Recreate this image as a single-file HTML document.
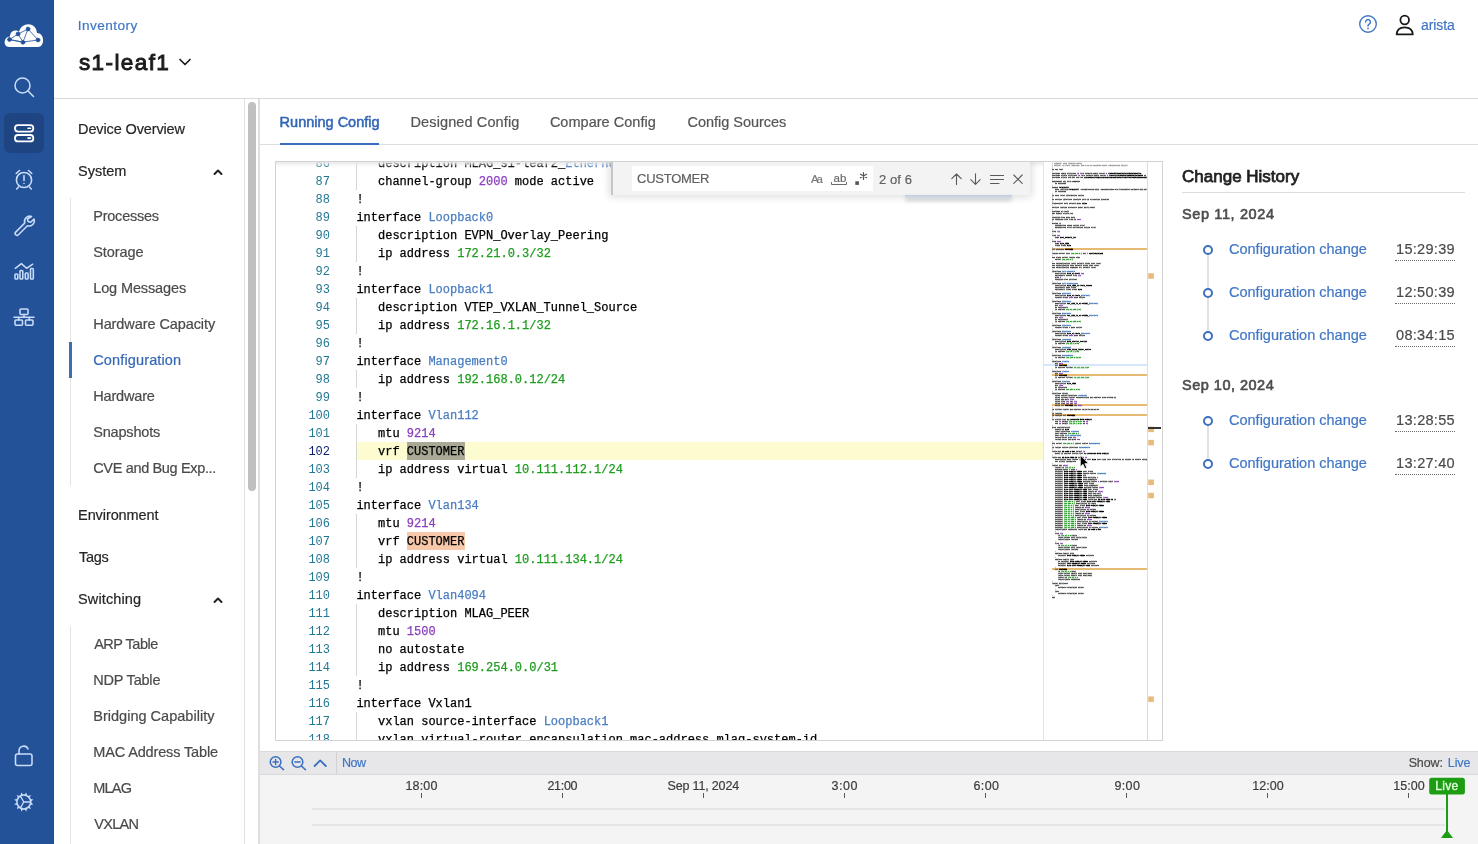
<!DOCTYPE html>
<html><head><meta charset="utf-8"><title>s1-leaf1</title>
<style>
*{box-sizing:border-box;margin:0;padding:0}
html,body{width:1478px;height:844px;overflow:hidden;background:#fff}
body{position:relative;font-family:"Liberation Sans",sans-serif}
.a{position:absolute}
.t{position:absolute;height:20px;line-height:20px;white-space:nowrap;-webkit-text-stroke:0.2px}
.code{position:absolute;font-family:"Liberation Mono",monospace;font-size:12px;line-height:18px;height:18px;white-space:pre;color:#000;-webkit-text-stroke:0.25px}
.ln{position:absolute;font-family:"Liberation Mono",monospace;font-size:12px;line-height:18px;height:18px;width:40px;text-align:right;color:#237893}
svg{position:absolute;overflow:visible}
.mmt{position:absolute;width:684px;height:2185px;overflow:hidden;font-family:"Liberation Mono",monospace;font-size:12px;line-height:10px;white-space:pre;color:#484848;font-weight:400;transform-origin:0 0;transform:scale(0.138889,0.2);-webkit-text-stroke:1.8px}
.mmt i{font-style:normal}.mmt .g{color:#999}.mmt b{font-weight:400;color:#000}
#w{position:absolute;left:0;top:0;width:1478px;height:844px;overflow:hidden;will-change:transform}
</style></head><body><div id="w">
<div class="a" style="left:0;top:0;width:54px;height:844px;background:#245299;border-right:1px solid #224b8c"></div><div class="a" style="left:4px;top:113px;width:40px;height:40px;border-radius:6px;background:#1f4482"></div><svg style="left:0;top:0" width="54" height="844" viewBox="0 0 54 844" fill="none" stroke="#c9dcf8" stroke-width="1.55" stroke-linecap="round" stroke-linejoin="round">
<!-- cloud logo -->
<path d="M9 47 C3 47 3 37 10 36.5 C10 31 16 29 19 32 C21 22 36 21 37 33 C45 33 45 47 38 47 Z" fill="#fff" stroke="none"/>
<g stroke="#245299" stroke-width="0.8" fill="#245299"><path d="M9.5 39.5 L18 34 L23 42 Z M18 34 L28 29 L23 42 M28 29 L38 40 L23 42 M9.5 39.5 L23 42" fill="none"/>
<circle cx="9.5" cy="39.5" r="1.9"/><circle cx="18" cy="34" r="1.9"/><circle cx="28" cy="29" r="1.9"/><circle cx="23" cy="42.3" r="1.9"/><circle cx="38" cy="40" r="1.9"/></g>
<!-- search -->
<circle cx="22.5" cy="85.5" r="7.5"/><path d="M28 91 L33.5 96.5"/>
<!-- devices -->
<g stroke="#fff" stroke-width="1.8"><rect x="15" y="125.2" width="18.3" height="6.400" rx="3"/><rect x="15" y="135" width="18.3" height="6.400" rx="3"/><path d="M28 128.3h2.5M28 138.1h2.5" stroke-width="1.6"/></g>
<!-- alarm -->
<circle cx="24" cy="180" r="7.6"/><path d="M24 175.5v5M24 183.4v.2M16.2 173.5l3.3-3M31.8 173.5l-3.3-3M18.5 187l-1.8 2M29.5 187l1.8 2"/>
<!-- wrench -->
<path d="M31.5 216.5a5.3 5.3 0 0 0-6.8 6.6l-9 9a1.9 1.9 0 0 0 2.7 2.7l9-9a5.3 5.3 0 0 0 6.6-6.8l-3.3 3.3-2.6-.7-.7-2.6z"/>
<!-- chart -->
<path d="M15.300 268.300L21.400 263.600L26.600 268.300L32.700 264.200"/><rect x="15" y="274" width="2.8" height="5" rx=".8"/><rect x="20" y="270.5" width="2.8" height="8.5" rx=".8"/><rect x="25.3" y="273" width="2.8" height="6" rx=".8"/><rect x="30.5" y="268.5" width="2.8" height="10.5" rx=".8"/>
<!-- network -->
<rect x="20" y="309" width="8" height="5.5" rx="1"/><rect x="15" y="320" width="7.5" height="5.3" rx="1"/><rect x="25.5" y="320" width="7.5" height="5.3" rx="1"/><path d="M14 317.3h20M24 314.5v2.8M18.7 317.3v2.7M29.3 317.3v2.7"/>
<!-- lock -->
<rect x="15.5" y="754" width="16.5" height="11.5" rx="2"/><path d="M19 754v-3.2a4.7 4.7 0 0 1 9-1.8"/>
<!-- gear -->
<circle cx="23.8" cy="802" r="6.9" stroke-width="1.5"/><path d="M23.8 802l-3.400-5.800M23.8 802h6.900M23.8 802l-3.400 5.800" stroke-width="1.3"/><path d="M31.1 802.6L33.4 804.6L30.4 805.1ZM29.8 806.2L30.8 809.0L28.0 808.0ZM26.9 808.6L26.4 811.6L24.4 809.3ZM23.2 809.3L21.2 811.6L20.7 808.6ZM19.6 808.0L16.8 809.0L17.8 806.2ZM17.2 805.1L14.2 804.6L16.5 802.6ZM16.5 801.4L14.2 799.4L17.2 798.9ZM17.8 797.8L16.8 795.0L19.6 796.0ZM20.7 795.4L21.2 792.4L23.2 794.7ZM24.4 794.7L26.4 792.4L26.9 795.4ZM28.0 796.0L30.8 795.0L29.8 797.8ZM30.4 798.9L33.4 799.4L31.1 801.4Z" fill="#c9dcf8" stroke="none"/>
</svg><div id="t_inv" class="t" style="left:77.80px;top:16px;font-size:13.6px;color:#4077c5;font-weight:400;letter-spacing:0.450px;">Inventory</div><div id="t_dev" class="t" style="left:78.95px;top:52.8px;font-size:22.5px;color:#1c1c1c;font-weight:400;letter-spacing:1.414px;height:30px;line-height:30px;margin-top:-5px;-webkit-text-stroke:0.95px #1c1c1c;">s1-leaf1</div><svg style="left:178px;top:56.500px" width="14" height="10" viewBox="0 0 14 10" fill="none" stroke="#1c1c1c" stroke-width="1.7" stroke-linecap="round" stroke-linejoin="round"><path d="M2 2.5l5 5 5-5"/></svg><div class="a" style="left:54px;top:98px;width:1424px;height:1px;background:#d9d9d9"></div><svg style="left:1358px;top:14px" width="20" height="20" viewBox="0 0 20 20" fill="none" stroke="#4077c5" stroke-width="1.4" stroke-linecap="round"><circle cx="10" cy="10" r="8.3"/><path d="M7.6 8a2.4 2.4 0 1 1 3.6 2.1c-.8.5-1.2.9-1.2 1.8" stroke-width="1.5"/><path d="M10 14.3v.2" stroke-width="1.7"/></svg><svg style="left:1394px;top:13px" width="22" height="24" viewBox="0 0 22 24" fill="none" stroke="#1a1a1a" stroke-width="1.8" stroke-linejoin="round"><circle cx="10.7" cy="7" r="4.3"/><path d="M2.6 21.3c.3-4.6 3.600-7 8.100-7s7.800 2.400 8.100 7z"/></svg><div id="t_user" class="t" style="left:1421.00px;top:15px;font-size:14px;color:#4077c5;font-weight:400;letter-spacing:-0.090px;">arista</div><div class="a" style="left:244px;top:99px;width:1px;height:745px;background:#e2e2e2"></div><div class="a" style="left:258px;top:99px;width:2px;height:745px;background:#dedede"></div><div class="a" style="left:248px;top:102px;width:8px;height:389px;border-radius:4px;background:#c0c0c0"></div><div id="m_do" class="t" style="left:78.05px;top:119px;font-size:14.5px;color:#262626;font-weight:400;letter-spacing:-0.129px;">Device Overview</div><div id="m_sys" class="t" style="left:78.05px;top:161px;font-size:14.5px;color:#262626;font-weight:400;letter-spacing:0.000px;">System</div><div id="m_env" class="t" style="left:78.05px;top:505px;font-size:14.5px;color:#262626;font-weight:400;letter-spacing:-0.090px;">Environment</div><div id="m_tags" class="t" style="left:78.95px;top:547px;font-size:14.5px;color:#262626;font-weight:400;letter-spacing:-0.300px;">Tags</div><div id="m_sw" class="t" style="left:78.05px;top:589px;font-size:14.5px;color:#262626;font-weight:400;letter-spacing:0.112px;">Switching</div><div id="s_proc" class="t" style="left:93.26px;top:206px;font-size:14.5px;color:#4a4a4a;font-weight:400;letter-spacing:-0.233px;">Processes</div><div id="s_stor" class="t" style="left:93.26px;top:242px;font-size:14.5px;color:#4a4a4a;font-weight:400;letter-spacing:-0.075px;">Storage</div><div id="s_log" class="t" style="left:93.26px;top:278px;font-size:14.5px;color:#4a4a4a;font-weight:400;letter-spacing:-0.130px;">Log Messages</div><div id="s_hwc" class="t" style="left:93.26px;top:314px;font-size:14.5px;color:#4a4a4a;font-weight:400;letter-spacing:-0.084px;">Hardware Capacity</div><div id="s_cfg" class="t" style="left:93.26px;top:350px;font-size:14.5px;color:#3567b5;font-weight:400;letter-spacing:0.135px;">Configuration</div><div id="s_hw" class="t" style="left:93.26px;top:386px;font-size:14.5px;color:#4a4a4a;font-weight:400;letter-spacing:-0.174px;">Hardware</div><div id="s_snap" class="t" style="left:93.26px;top:422px;font-size:14.5px;color:#4a4a4a;font-weight:400;letter-spacing:-0.187px;">Snapshots</div><div id="s_cve" class="t" style="left:93.26px;top:458px;font-size:14.5px;color:#4a4a4a;font-weight:400;letter-spacing:-0.347px;">CVE and Bug Exp...</div><div id="s_arp" class="t" style="left:94.16px;top:634px;font-size:14.5px;color:#4a4a4a;font-weight:400;letter-spacing:-0.482px;">ARP Table</div><div id="s_ndp" class="t" style="left:93.26px;top:670px;font-size:14.5px;color:#4a4a4a;font-weight:400;letter-spacing:-0.197px;">NDP Table</div><div id="s_brg" class="t" style="left:93.26px;top:706px;font-size:14.5px;color:#4a4a4a;font-weight:400;letter-spacing:0.015px;">Bridging Capability</div><div id="s_mac" class="t" style="left:93.26px;top:742px;font-size:14.5px;color:#4a4a4a;font-weight:400;letter-spacing:-0.141px;">MAC Address Table</div><div id="s_mlag" class="t" style="left:93.26px;top:778px;font-size:14.5px;color:#4a4a4a;font-weight:400;letter-spacing:-0.780px;">MLAG</div><div id="s_vx" class="t" style="left:94.16px;top:814px;font-size:14.5px;color:#4a4a4a;font-weight:400;letter-spacing:-0.675px;">VXLAN</div><div class="a" style="left:70px;top:198px;width:1px;height:288px;background:#e3e3e3"></div><div class="a" style="left:70px;top:626px;width:1px;height:218px;background:#e3e3e3"></div><div class="a" style="left:69px;top:342px;width:3px;height:36px;background:#3c6cb6"></div><svg style="left:213.300px;top:167.5px" width="10" height="8" viewBox="0 0 10 8" fill="none" stroke="#222" stroke-width="2" stroke-linecap="round" stroke-linejoin="round"><path d="M1.5 6l3.5-3.5 3.500 3.500"/></svg><svg style="left:213.300px;top:595.5px" width="10" height="8" viewBox="0 0 10 8" fill="none" stroke="#222" stroke-width="2" stroke-linecap="round" stroke-linejoin="round"><path d="M1.5 6l3.5-3.5 3.500 3.500"/></svg><div class="a" style="left:260px;top:144px;width:1218px;height:1px;background:#dedede"></div><div id="tab1" class="t" style="left:279.60px;top:112px;font-size:14.5px;color:#3165b5;font-weight:400;letter-spacing:-0.000px;-webkit-text-stroke:0.5px #3165b5;">Running Config</div><div id="tab2" class="t" style="left:410.52px;top:112px;font-size:14.5px;color:#555;font-weight:400;letter-spacing:0.116px;">Designed Config</div><div id="tab3" class="t" style="left:549.89px;top:112px;font-size:14.5px;color:#555;font-weight:400;letter-spacing:0.024px;">Compare Config</div><div id="tab4" class="t" style="left:687.47px;top:112px;font-size:14.5px;color:#555;font-weight:400;letter-spacing:-0.021px;">Config Sources</div><div class="a" style="left:280px;top:143px;width:99px;height:2px;background:#3a6dbd"></div><div class="a" style="left:275px;top:161px;width:888px;height:580px;border:1px solid #d2d2d2;background:#fff"></div><div class="a" id="ed" style="left:276px;top:162px;width:886px;height:578px;overflow:hidden"><div class="a" style="left:81px;top:280px;width:686px;height:18px;background:#fdfbd0"></div><div class="a" style="left:131.4px;top:280px;width:57.6px;height:18px;background:#a9a995"></div><div class="a" style="left:131.4px;top:370px;width:57.6px;height:18px;background:#f7c8a9"></div><div class="a" style="left:80px;top:-8px;width:1px;height:18px;background:#d6d6d6"></div><div class="a" style="left:80px;top:10px;width:1px;height:18px;background:#d6d6d6"></div><div class="a" style="left:80px;top:64px;width:1px;height:18px;background:#d6d6d6"></div><div class="a" style="left:80px;top:82px;width:1px;height:18px;background:#d6d6d6"></div><div class="a" style="left:80px;top:136px;width:1px;height:18px;background:#d6d6d6"></div><div class="a" style="left:80px;top:154px;width:1px;height:18px;background:#d6d6d6"></div><div class="a" style="left:80px;top:208px;width:1px;height:18px;background:#d6d6d6"></div><div class="a" style="left:80px;top:262px;width:1px;height:18px;background:#d6d6d6"></div><div class="a" style="left:80px;top:280px;width:1px;height:18px;background:#d6d6d6"></div><div class="a" style="left:80px;top:298px;width:1px;height:18px;background:#d6d6d6"></div><div class="a" style="left:80px;top:352px;width:1px;height:18px;background:#d6d6d6"></div><div class="a" style="left:80px;top:370px;width:1px;height:18px;background:#d6d6d6"></div><div class="a" style="left:80px;top:388px;width:1px;height:18px;background:#d6d6d6"></div><div class="a" style="left:80px;top:442px;width:1px;height:18px;background:#d6d6d6"></div><div class="a" style="left:80px;top:460px;width:1px;height:18px;background:#d6d6d6"></div><div class="a" style="left:80px;top:478px;width:1px;height:18px;background:#d6d6d6"></div><div class="a" style="left:80px;top:496px;width:1px;height:18px;background:#d6d6d6"></div><div class="a" style="left:80px;top:550px;width:1px;height:18px;background:#d6d6d6"></div><div class="a" style="left:80px;top:568px;width:1px;height:18px;background:#d6d6d6"></div><div class="ln" style="left:14px;top:-7px;color:#237893">86</div><div class="code" style="left:80.4px;top:-7px">   description MLAG_s1-leaf2_<span style="color:#4a7ec2">Ethernet6</span></div><div class="ln" style="left:14px;top:11px;color:#237893">87</div><div class="code" style="left:80.4px;top:11px">   channel-group <span style="color:#8a3fc0">2000</span> mode active</div><div class="ln" style="left:14px;top:29px;color:#237893">88</div><div class="code" style="left:80.4px;top:29px">!</div><div class="ln" style="left:14px;top:47px;color:#237893">89</div><div class="code" style="left:80.4px;top:47px">interface <span style="color:#4a7ec2">Loopback0</span></div><div class="ln" style="left:14px;top:65px;color:#237893">90</div><div class="code" style="left:80.4px;top:65px">   description EVPN_Overlay_Peering</div><div class="ln" style="left:14px;top:83px;color:#237893">91</div><div class="code" style="left:80.4px;top:83px">   ip address <span style="color:#1f9d1f">172.21.0.3/32</span></div><div class="ln" style="left:14px;top:101px;color:#237893">92</div><div class="code" style="left:80.4px;top:101px">!</div><div class="ln" style="left:14px;top:119px;color:#237893">93</div><div class="code" style="left:80.4px;top:119px">interface <span style="color:#4a7ec2">Loopback1</span></div><div class="ln" style="left:14px;top:137px;color:#237893">94</div><div class="code" style="left:80.4px;top:137px">   description VTEP_VXLAN_Tunnel_Source</div><div class="ln" style="left:14px;top:155px;color:#237893">95</div><div class="code" style="left:80.4px;top:155px">   ip address <span style="color:#1f9d1f">172.16.1.1/32</span></div><div class="ln" style="left:14px;top:173px;color:#237893">96</div><div class="code" style="left:80.4px;top:173px">!</div><div class="ln" style="left:14px;top:191px;color:#237893">97</div><div class="code" style="left:80.4px;top:191px">interface <span style="color:#4a7ec2">Management0</span></div><div class="ln" style="left:14px;top:209px;color:#237893">98</div><div class="code" style="left:80.4px;top:209px">   ip address <span style="color:#1f9d1f">192.168.0.12/24</span></div><div class="ln" style="left:14px;top:227px;color:#237893">99</div><div class="code" style="left:80.4px;top:227px">!</div><div class="ln" style="left:14px;top:245px;color:#237893">100</div><div class="code" style="left:80.4px;top:245px">interface <span style="color:#4a7ec2">Vlan112</span></div><div class="ln" style="left:14px;top:263px;color:#237893">101</div><div class="code" style="left:80.4px;top:263px">   mtu <span style="color:#8a3fc0">9214</span></div><div class="ln" style="left:14px;top:281px;color:#0b216f">102</div><div class="code" style="left:80.4px;top:281px">   vrf CUSTOMER</div><div class="ln" style="left:14px;top:299px;color:#237893">103</div><div class="code" style="left:80.4px;top:299px">   ip address virtual <span style="color:#1f9d1f">10.111.112.1/24</span></div><div class="ln" style="left:14px;top:317px;color:#237893">104</div><div class="code" style="left:80.4px;top:317px">!</div><div class="ln" style="left:14px;top:335px;color:#237893">105</div><div class="code" style="left:80.4px;top:335px">interface <span style="color:#4a7ec2">Vlan134</span></div><div class="ln" style="left:14px;top:353px;color:#237893">106</div><div class="code" style="left:80.4px;top:353px">   mtu <span style="color:#8a3fc0">9214</span></div><div class="ln" style="left:14px;top:371px;color:#237893">107</div><div class="code" style="left:80.4px;top:371px">   vrf CUSTOMER</div><div class="ln" style="left:14px;top:389px;color:#237893">108</div><div class="code" style="left:80.4px;top:389px">   ip address virtual <span style="color:#1f9d1f">10.111.134.1/24</span></div><div class="ln" style="left:14px;top:407px;color:#237893">109</div><div class="code" style="left:80.4px;top:407px">!</div><div class="ln" style="left:14px;top:425px;color:#237893">110</div><div class="code" style="left:80.4px;top:425px">interface <span style="color:#4a7ec2">Vlan4094</span></div><div class="ln" style="left:14px;top:443px;color:#237893">111</div><div class="code" style="left:80.4px;top:443px">   description MLAG_PEER</div><div class="ln" style="left:14px;top:461px;color:#237893">112</div><div class="code" style="left:80.4px;top:461px">   mtu <span style="color:#8a3fc0">1500</span></div><div class="ln" style="left:14px;top:479px;color:#237893">113</div><div class="code" style="left:80.4px;top:479px">   no autostate</div><div class="ln" style="left:14px;top:497px;color:#237893">114</div><div class="code" style="left:80.4px;top:497px">   ip address <span style="color:#1f9d1f">169.254.0.0/31</span></div><div class="ln" style="left:14px;top:515px;color:#237893">115</div><div class="code" style="left:80.4px;top:515px">!</div><div class="ln" style="left:14px;top:533px;color:#237893">116</div><div class="code" style="left:80.4px;top:533px">interface Vxlan1</div><div class="ln" style="left:14px;top:551px;color:#237893">117</div><div class="code" style="left:80.4px;top:551px">   vxlan source-interface <span style="color:#4a7ec2">Loopback1</span></div><div class="ln" style="left:14px;top:569px;color:#237893">118</div><div class="code" style="left:80.4px;top:569px">   vxlan virtual-router encapsulation mac-address mlag-system-id</div><div class="a" style="left:0;top:0;width:767px;height:5px;background:linear-gradient(#e9e9e9,rgba(255,255,255,0))"></div><div class="a" style="left:767px;top:0;width:104px;height:579px;background:#fff;border-left:1px solid #e4e4e4"></div><svg style="left:0;top:0" width="886" height="579" viewBox="0 0 886 579" shape-rendering="crispEdges"><rect x="776" y="86" width="95" height="2" fill="#e8b973"/><rect x="789" y="86" width="8" height="2" fill="#d08a1e"/><rect x="768" y="202" width="103" height="2" fill="#d6e6fb"/><rect x="783" y="202" width="8" height="2" fill="#d08a1e"/><rect x="776" y="212" width="95" height="2" fill="#e8b973"/><rect x="783" y="212" width="8" height="2" fill="#d08a1e"/><rect x="776" y="242" width="95" height="2" fill="#e8b973"/><rect x="789" y="242" width="8" height="2" fill="#d08a1e"/><rect x="776" y="252" width="95" height="2" fill="#e8b973"/><rect x="791" y="252" width="8" height="2" fill="#d08a1e"/><rect x="776" y="406" width="95" height="2" fill="#e8b973"/><rect x="783" y="406" width="8" height="2" fill="#d08a1e"/></svg><div class="mmt" style="left:776px;top:0"><i class="g">! Command: show running-config</i>
<i class="g">! device: s1-leaf1 (cEOSLab, EOS-4.30.1F-32315456.4301F (engineering build))</i>
<i class="g">!</i>
no aaa root
<i class="g">!</i>
username admin privilege <i style="color:#8a3fc0">15</i> role network-admin secret <i style="color:#8a3fc0">5</i> $<b>1$5O85YVVn$HrXcfOivJEnISTMb6xrJc.</b>
username arista privilege <i style="color:#8a3fc0">15</i> role network-admin secret <i style="color:#8a3fc0">5</i> $<b>1$4VjIjfd1$XkUVulbNDBhFMiPSfdEUV0</b> ab
username arista ssh-key ssh-rsa <b>AAAAB3NzaC1yc2EAAAADAQABAAABAQDHfbQ3pLfPCZOf7eqf3Dd5VqKCNhQ9ZkJ</b>
<i class="g">!</i>
management api htlp-commands
   no shutdown
<i class="g">!</i>
daemon <b>TerminAttr</b>
   exec /usr/bin/<b>TerminAttr</b> -cvcompression=gzip -smashexcludes=ale,flexCounter,hardware,kni,pul
   no shutdown
<i class="g">!</i>
ip dhcp relay information option
<i class="g">!</i>
no service interface inactive port-id allocation disabled
<i class="g">!</i>
transceiver qsfp default-mode <b>4x10G</b>
<i class="g">!</i>
service routing protocols model multi-agent
<i class="g">!</i>
hostname s1-leaf1
dns domain arista.lab
<i class="g">!</i>
spanning-tree mode mstp
no spanning-tree vlan-id <i style="color:#8a3fc0">4094</i>
<i class="g">!</i>
system l1
   unsupported speed action error
   unsupported error-correction action error
<i class="g">!</i>
vlan <i style="color:#8a3fc0">112</i>
<i class="g">!</i>
vlan <i style="color:#8a3fc0">134</i>
   name <b>Host_Network_134</b>
<i class="g">!</i>
vlan <i style="color:#8a3fc0">4094</i>
   name <b>MLAG_PEER</b>
   trunk group <b>MLAG</b>
<i class="g">!</i>
vrf instance <b>CUSTOMER</b>
<i class="g">!</i>
radius-server host <i style="color:#1f9d1f">192.168.0.1</i> key <i style="color:#8a3fc0">7</i> <b>0207165218120E</b>
<i class="g">!</i>
aaa group server radius atds
   server <i style="color:#1f9d1f">192.168.0.1</i>
<i class="g">!</i>
aaa authentication login default group atds local
aaa authorization exec default group atds local
aaa authorization commands all default local
<i class="g">!</i>
interface <i style="color:#4a7ec2">Port-Channel5</i>
   description <b>MLAG_s1-host1</b> <i style="color:#8a3fc0">122</i>
   switchport access vlan <i style="color:#8a3fc0">112</i>
   mlag <i style="color:#8a3fc0">5</i>
   spanning-tree portfast
<i class="g">!</i>
interface <i style="color:#4a7ec2">Port-Channel2000</i>
   description <b>MLAG_PEER_s1-leaf2_Po2000</b>
   switchport mode trunk
   switchport trunk group <b>MLAG</b>
<i class="g">!</i>
interface <i style="color:#4a7ec2">Ethernet1</i>
   description <b>MLAG_s1-leaf2_</b><i style="color:#4a7ec2">Ethernet1</i>
   channel-group <i style="color:#8a3fc0">2000</i> mode active
<i class="g">!</i>
interface <i style="color:#4a7ec2">Ethernet2</i>
   description <b>P2P_LINK_TO_S1-SPINE1_</b><i style="color:#4a7ec2">Ethernet2</i>
   mtu <i style="color:#8a3fc0">9214</i>
   no switchport
   ip address <i style="color:#1f9d1f">172.31.255.1/31</i>
<i class="g">!</i>
interface <i style="color:#4a7ec2">Ethernet3</i>
   description <b>P2P_LINK_TO_S1-SPINE2_</b><i style="color:#4a7ec2">Ethernet2</i>
   mtu <i style="color:#8a3fc0">9214</i>
   no switchport
   ip address <i style="color:#1f9d1f">172.31.255.3/31</i>
<i class="g">!</i>
interface <i style="color:#4a7ec2">Ethernet4</i>
   channel-group <i style="color:#8a3fc0">5</i> mode active
<i class="g">!</i>
interface <i style="color:#4a7ec2">Ethernet6</i>
   description <b>MLAG_s1-leaf2_</b><i style="color:#4a7ec2">Ethernet6</i>
   channel-group <i style="color:#8a3fc0">2000</i> mode active
<i class="g">!</i>
interface <i style="color:#4a7ec2">Loopback0</i>
   description <b>EVPN_Overlay_Peering</b>
   ip address <i style="color:#1f9d1f">172.21.0.3/32</i>
<i class="g">!</i>
interface <i style="color:#4a7ec2">Loopback1</i>
   description <b>VTEP_VXLAN_Tunnel_Source</b>
   ip address <i style="color:#1f9d1f">172.16.1.1/32</i>
<i class="g">!</i>
interface <i style="color:#4a7ec2">Management0</i>
   ip address <i style="color:#1f9d1f">192.168.0.12/24</i>
<i class="g">!</i>
interface <i style="color:#4a7ec2">Vlan112</i>
   mtu <i style="color:#8a3fc0">9214</i>
   vrf <b>CUSTOMER</b>
   ip address virtual <i style="color:#1f9d1f">10.111.112.1/24</i>
<i class="g">!</i>
interface <i style="color:#4a7ec2">Vlan134</i>
   mtu <i style="color:#8a3fc0">9214</i>
   vrf <b>CUSTOMER</b>
   ip address virtual <i style="color:#1f9d1f">10.111.134.1/24</i>
<i class="g">!</i>
interface <i style="color:#4a7ec2">Vlan4094</i>
   description <b>MLAG_PEER</b>
   mtu <i style="color:#8a3fc0">1500</i>
   no autostate
   ip address <i style="color:#1f9d1f">169.254.0.0/31</i>
<i class="g">!</i>
interface Vxlan1
   vxlan source-interface <i style="color:#4a7ec2">Loopback1</i>
   vxlan virtual-router encapsulation mac-address mlag-system-id
   vxlan udp-port <i style="color:#8a3fc0">4789</i>
   vxlan vlan <i style="color:#8a3fc0">112</i> vni <i style="color:#8a3fc0">112</i>
   vxlan vlan <i style="color:#8a3fc0">134</i> vni <i style="color:#8a3fc0">134</i>
   vxlan vrf <b>CUSTOMER</b> vni <i style="color:#8a3fc0">5001</i>
<i class="g">!</i>
ip virtual-router mac-address 00:1c:73:00:00:99
<i class="g">!</i>
ip routing
ip routing vrf <b>CUSTOMER</b>
<i class="g">!</i>
ip prefix-list <b>PL-LOOPBACKS-EVPN-OVERLAY</b>
   seq <i style="color:#8a3fc0">10</i> permit <i style="color:#1f9d1f">172.21.0.0/24</i> eq <i style="color:#8a3fc0">32</i>
   seq <i style="color:#8a3fc0">20</i> permit <i style="color:#1f9d1f">172.16.1.0/24</i> eq <i style="color:#8a3fc0">32</i>
<i class="g">!</i>
mlag configuration
   domain-id <b>MLAG</b>
   local-interface <i style="color:#4a7ec2">Vlan4094</i>
   peer-address <i style="color:#1f9d1f">169.254.0.1</i>
   peer-link <i style="color:#4a7ec2">Port-Channel2000</i>
   reload-delay mlag <i style="color:#8a3fc0">300</i>
   reload-delay non-mlag <i style="color:#8a3fc0">330</i>
<i class="g">!</i>
ntp server <i style="color:#1f9d1f">192.168.0.1</i> iburst source <i style="color:#4a7ec2">Management0</i>
<i class="g">!</i>
ip radius source-interface <i style="color:#4a7ec2">Management0</i>
<i class="g">!</i>
route-map <b>RM-CONN-2-BGP</b> permit <i style="color:#8a3fc0">10</i>
   match ip address prefix-list <b>PL-LOOPBACKS-EVPN-OVERLAY</b>
<i class="g">!</i>
route-map <b>RM-MLAG-PEER-IN</b> permit <i style="color:#8a3fc0">10</i>
   description Make routes learned over <b>MLAG</b> Peer-link less preferred on spines to ensure optim
   set origin incomplete
<i class="g">!</i>
router bgp <i style="color:#8a3fc0">65101</i>
   router-id <i style="color:#1f9d1f">172.21.0.3</i>
   maximum-paths <i style="color:#8a3fc0">4</i> ecmp <i style="color:#8a3fc0">4</i>
   neighbor <b>EVPN-OVERLAY-PEERS</b> peer group
   neighbor <b>EVPN-OVERLAY-PEERS</b> update-source <i style="color:#4a7ec2">Loopback0</i>
   neighbor <b>EVPN-OVERLAY-PEERS</b> bfd
   neighbor <b>EVPN-OVERLAY-PEERS</b> ebgp-multihop <i style="color:#8a3fc0">3</i>
   neighbor <b>EVPN-OVERLAY-PEERS</b> send-community
   neighbor <b>EVPN-OVERLAY-PEERS</b> maximum-routes <i style="color:#8a3fc0">0</i> warning-limit <i style="color:#8a3fc0">12000</i>
   neighbor <b>IPv4-UNDERLAY-PEERS</b> peer group
   neighbor <b>IPv4-UNDERLAY-PEERS</b> send-community
   neighbor <b>IPv4-UNDERLAY-PEERS</b> maximum-routes <i style="color:#8a3fc0">12000</i>
   neighbor <b>MLAG-IPv4-UNDERLAY-PEER</b> peer group
   neighbor <b>MLAG-IPv4-UNDERLAY-PEER</b> remote-as <i style="color:#8a3fc0">65101</i>
   neighbor <b>MLAG-IPv4-UNDERLAY-PEER</b> next-hop-self
   neighbor <b>MLAG-IPv4-UNDERLAY-PEER</b> send-community
   neighbor <b>MLAG-IPv4-UNDERLAY-PEER</b> maximum-routes <i style="color:#8a3fc0">12000</i>
   neighbor <b>MLAG-IPv4-UNDERLAY-PEER</b> route-map <b>RM-MLAG-PEER-IN</b> in
   neighbor <i style="color:#1f9d1f">169.254.0.1</i> peer group <b>MLAG-IPv4-UNDERLAY-PEER</b>
   neighbor <i style="color:#1f9d1f">169.254.0.1</i> description s1-leaf2
   neighbor <i style="color:#1f9d1f">172.21.0.1</i> peer group <b>EVPN-OVERLAY-PEERS</b>
   neighbor <i style="color:#1f9d1f">172.21.0.1</i> remote-as <i style="color:#8a3fc0">65100</i>
   neighbor <i style="color:#1f9d1f">172.21.0.1</i> description s1-spine1
   neighbor <i style="color:#1f9d1f">172.21.0.2</i> peer group <b>EVPN-OVERLAY-PEERS</b>
   neighbor <i style="color:#1f9d1f">172.21.0.2</i> remote-as <i style="color:#8a3fc0">65100</i>
   neighbor <i style="color:#1f9d1f">172.21.0.2</i> description s1-spine2
   neighbor <i style="color:#1f9d1f">172.31.255.0</i> peer group <b>IPv4-UNDERLAY-PEERS</b>
   neighbor <i style="color:#1f9d1f">172.31.255.0</i> remote-as <i style="color:#8a3fc0">65100</i>
   neighbor <i style="color:#1f9d1f">172.31.255.0</i> description s1-spine1_<i style="color:#4a7ec2">Ethernet2</i>
   neighbor <i style="color:#1f9d1f">172.31.255.2</i> peer group <b>IPv4-UNDERLAY-PEERS</b>
   neighbor <i style="color:#1f9d1f">172.31.255.2</i> remote-as <i style="color:#8a3fc0">65100</i>
   neighbor <i style="color:#1f9d1f">172.31.255.2</i> description s1-spine2_<i style="color:#4a7ec2">Ethernet2</i>
   redistribute connected route-map <b>RM-CONN-2-BGP</b>
   <i class="g">!</i>
   vlan <i style="color:#8a3fc0">112</i>
      rd <i style="color:#1f9d1f">172.21.0.3</i>:10112
      route-target both 10112:10112
      redistribute learned
   <i class="g">!</i>
   vlan <i style="color:#8a3fc0">134</i>
      rd <i style="color:#1f9d1f">172.21.0.3</i>:10134
      route-target both 10134:10134
      redistribute learned
   <i class="g">!</i>
   address-family evpn
      neighbor <b>EVPN-OVERLAY-PEERS</b> activate
   <i class="g">!</i>
   address-family ipv4
      no neighbor <b>EVPN-OVERLAY-PEERS</b> activate
      neighbor <b>IPv4-UNDERLAY-PEERS</b> activate
      neighbor <b>MLAG-IPv4-UNDERLAY-PEER</b> activate
   <i class="g">!</i>
   vrf <b>CUSTOMER</b>
      rd <i style="color:#1f9d1f">172.21.0.3</i>:5001
      route-target import evpn 5001:5001
      route-target export evpn 5001:5001
      router-id <i style="color:#1f9d1f">172.21.0.3</i>
      redistribute connected
<i class="g">!</i>
router multicast
   ipv4
      software-forwarding kernel
   <i class="g">!</i>
   ipv6
      software-forwarding kernel
<i class="g">!</i>
end</div><div class="a" style="left:871px;top:0;width:15px;height:579px;background:#fff;border-left:1px solid #dcdcdc"></div><svg style="left:0;top:0" width="886" height="579" viewBox="0 0 886 579"><rect x="872.2" y="111.23" width="5.7" height="5.5" fill="#e8bb7c"/><rect x="872.2" y="264.64" width="5.7" height="5.5" fill="#e8bb7c"/><rect x="872.2" y="277.87" width="5.7" height="5.5" fill="#e8bb7c"/><rect x="872.2" y="317.54" width="5.7" height="5.5" fill="#e8bb7c"/><rect x="872.2" y="330.76" width="5.7" height="5.5" fill="#e8bb7c"/><rect x="872.2" y="534.43" width="5.7" height="5.5" fill="#e8bb7c"/><rect x="872" y="265" width="13" height="2" fill="#333"/></svg><div class="a" style="left:335px;top:0;width:419px;height:33px;background:#f3f3f3;box-shadow:0 0 8px 2px rgba(0,0,0,.13);border-left:2px solid #c6c6c6"></div><div class="a" style="left:629px;top:33px;width:107px;height:4px;background:linear-gradient(#c3cfdf,#d9dde3);border-radius:0 0 3px 3px;box-shadow:0 2px 4px rgba(0,0,0,.18)"></div><div class="a" style="left:356px;top:4px;width:241px;height:25px;background:#fff"></div></div><div id="f_q" class="t" style="left:637.00px;top:168.5px;font-size:13px;color:#616161;font-weight:400;letter-spacing:-0.257px;">CUSTOMER</div><div id="f_cnt" class="t" style="left:879.00px;top:169.5px;font-size:13px;color:#616161;font-weight:400;letter-spacing:0.090px;">2 of 6</div><div id="f_aa" class="t" style="left:811.00px;top:169px;font-size:11.5px;color:#7a7a7a;font-weight:400;letter-spacing:-2.250px;">Aa</div><div id="f_ab" class="t" style="left:833.50px;top:167.5px;font-size:11.5px;color:#6a6a6a;font-weight:400;letter-spacing:0.000px;">ab</div><svg style="left:800px;top:160px" width="240" height="45" viewBox="800 160 240 45" fill="none" stroke="#5a5a5a" stroke-width="1.1" stroke-linecap="round" stroke-linejoin="round">
<path d="M831.5 182.500v2h15v-2" stroke="#6a6a6a" stroke-width="1"/>
<rect x="855.3" y="181.300" width="3.600" height="3.600" fill="#555" stroke="none"/>
<path d="M863.500 172.500v7M860.500 174.200l6 3.500M866.500 174.200l-6 3.500" stroke="#555" stroke-width="1.2"/>
<path d="M956.500 184.500v-10.500M951.800 178.700l4.700-4.700 4.700 4.700"/>
<path d="M975.500 173.700v10.500M970.800 179.700l4.700 4.700 4.700-4.700"/>
<path d="M990.500 175.500h13M990.500 179.500h13M990.500 183.500h8.500"/>
<path d="M1013.800 175l8.400 8.400M1022.200 175l-8.400 8.400"/>
</svg><svg style="left:1079.700px;top:454.800px" width="9.500" height="14.600" viewBox="0 0 13 20"><path d="M0.500 0.500v15.500l3.600-3.400 2.600 6 2.500-1.100-2.600-5.800h5z" fill="#000" stroke="#fff" stroke-width="0.900"/></svg><div id="ch_title" class="t" style="left:1182.05px;top:166.5px;font-size:17px;color:#1f1f1f;font-weight:400;letter-spacing:-0.003px;-webkit-text-stroke:0.75px #1f1f1f;">Change History</div><div class="a" style="left:1182px;top:192px;width:283px;height:1px;background:#dcdcdc"></div><div id="ch_d1" class="t" style="left:1182.05px;top:204.2px;font-size:14.5px;color:#4d4d4d;font-weight:400;letter-spacing:0.614px;-webkit-text-stroke:0.6px #4d4d4d;">Sep 11, 2024</div><div id="ch_d2" class="t" style="left:1182.05px;top:375.1px;font-size:14.5px;color:#4d4d4d;font-weight:400;letter-spacing:0.492px;-webkit-text-stroke:0.6px #4d4d4d;">Sep 10, 2024</div><div class="a" style="left:1207px;top:249px;width:2px;height:86px;background:#e2e2e2"></div><div class="a" style="left:1207px;top:420px;width:2px;height:43px;background:#e2e2e2"></div><div class="a" style="left:1203px;top:244.5px;width:10px;height:10px;border-radius:50%;border:2px solid #3d70bd;background:#fff"></div><div id="ch_c0" class="t" style="left:1229.00px;top:239px;font-size:14.5px;color:#4077c5;font-weight:400;letter-spacing:0.000px;">Configuration change</div><div id="ch_t0" class="t" style="left:1396.05px;top:239px;font-size:14.5px;color:#4a4a4a;font-weight:400;letter-spacing:0.306px;">15:29:39</div><div class="a" style="left:1395px;top:260px;width:60px;height:0;border-top:1px dotted #6a6a6a"></div><div class="a" style="left:1203px;top:287.5px;width:10px;height:10px;border-radius:50%;border:2px solid #3d70bd;background:#fff"></div><div id="ch_c1" class="t" style="left:1229.00px;top:282px;font-size:14.5px;color:#4077c5;font-weight:400;letter-spacing:0.000px;">Configuration change</div><div id="ch_t1" class="t" style="left:1396.05px;top:282px;font-size:14.5px;color:#4a4a4a;font-weight:400;letter-spacing:0.306px;">12:50:39</div><div class="a" style="left:1395px;top:303px;width:60px;height:0;border-top:1px dotted #6a6a6a"></div><div class="a" style="left:1203px;top:330.5px;width:10px;height:10px;border-radius:50%;border:2px solid #3d70bd;background:#fff"></div><div id="ch_c2" class="t" style="left:1229.00px;top:325px;font-size:14.5px;color:#4077c5;font-weight:400;letter-spacing:0.000px;">Configuration change</div><div id="ch_t2" class="t" style="left:1396.05px;top:325px;font-size:14.5px;color:#4a4a4a;font-weight:400;letter-spacing:0.305px;">08:34:15</div><div class="a" style="left:1395px;top:346px;width:60px;height:0;border-top:1px dotted #6a6a6a"></div><div class="a" style="left:1203px;top:415.5px;width:10px;height:10px;border-radius:50%;border:2px solid #3d70bd;background:#fff"></div><div id="ch_c3" class="t" style="left:1229.00px;top:410px;font-size:14.5px;color:#4077c5;font-weight:400;letter-spacing:0.000px;">Configuration change</div><div id="ch_t3" class="t" style="left:1396.05px;top:410px;font-size:14.5px;color:#4a4a4a;font-weight:400;letter-spacing:0.308px;">13:28:55</div><div class="a" style="left:1395px;top:431px;width:60px;height:0;border-top:1px dotted #6a6a6a"></div><div class="a" style="left:1203px;top:458.5px;width:10px;height:10px;border-radius:50%;border:2px solid #3d70bd;background:#fff"></div><div id="ch_c4" class="t" style="left:1229.00px;top:453px;font-size:14.5px;color:#4077c5;font-weight:400;letter-spacing:0.000px;">Configuration change</div><div id="ch_t4" class="t" style="left:1396.05px;top:453px;font-size:14.5px;color:#4a4a4a;font-weight:400;letter-spacing:0.308px;">13:27:40</div><div class="a" style="left:1395px;top:474px;width:60px;height:0;border-top:1px dotted #6a6a6a"></div><div class="a" style="left:260px;top:751px;width:1218px;height:24px;background:#e7e7e9;border-top:1px solid #dadada;border-bottom:1px solid #d9d9d9"></div><div class="a" style="left:260px;top:775px;width:1218px;height:69px;background:#f4f4f5"></div><div class="a" style="left:336px;top:752px;width:1px;height:22px;background:#d2d2d4"></div><svg style="left:260px;top:751px" width="80" height="24" viewBox="260 751 80 24" fill="none" stroke="#3a6fc0" stroke-width="1.5" stroke-linecap="round" stroke-linejoin="round">
<circle cx="275.600" cy="762" r="5.300"/><path d="M279.500 766l4 3.600M273 762h5.200M275.600 759.400v5.200"/>
<circle cx="297.500" cy="762" r="5.300"/><path d="M301.400 766l4 3.600M294.900 762h5.200"/>
<path d="M314.600 766l5.600-5.600 5.600 5.600" stroke-width="1.800"/>
</svg><div id="tl_now" class="t" style="left:342.05px;top:752.5px;font-size:12.5px;color:#4077c5;font-weight:400;letter-spacing:-0.495px;">Now</div><div id="tl_show" class="t" style="left:1408.63px;top:752.5px;font-size:12.5px;color:#4a4a4a;font-weight:400;letter-spacing:-0.110px;">Show:</div><div id="tl_live" class="t" style="left:1447.84px;top:752.5px;font-size:12.5px;color:#4077c5;font-weight:400;letter-spacing:-0.120px;">Live</div><div id="tk0" class="t" style="left:405.49px;top:776px;font-size:12.5px;color:#3c3c3c;font-weight:400;letter-spacing:0.141px;">18:00</div><div class="a" style="left:421px;top:793px;width:1px;height:5px;background:#585858"></div><div id="tk1" class="t" style="left:547.38px;top:776px;font-size:12.5px;color:#3c3c3c;font-weight:400;letter-spacing:-0.270px;">21:00</div><div class="a" style="left:562px;top:793px;width:1px;height:5px;background:#585858"></div><div id="tk2" class="t" style="left:667.53px;top:776px;font-size:12.5px;color:#3c3c3c;font-weight:400;letter-spacing:-0.168px;">Sep 11, 2024</div><div class="a" style="left:703px;top:793px;width:1px;height:5px;background:#585858"></div><div id="tk3" class="t" style="left:831.43px;top:776px;font-size:12.5px;color:#3c3c3c;font-weight:400;letter-spacing:0.540px;">3:00</div><div class="a" style="left:844px;top:793px;width:1px;height:5px;background:#585858"></div><div id="tk4" class="t" style="left:973.40px;top:776px;font-size:12.5px;color:#3c3c3c;font-weight:400;letter-spacing:0.450px;">6:00</div><div class="a" style="left:985px;top:793px;width:1px;height:5px;background:#585858"></div><div id="tk5" class="t" style="left:1114.41px;top:776px;font-size:12.5px;color:#3c3c3c;font-weight:400;letter-spacing:0.390px;">9:00</div><div class="a" style="left:1126px;top:793px;width:1px;height:5px;background:#585858"></div><div id="tk6" class="t" style="left:1252.24px;top:776px;font-size:12.5px;color:#3c3c3c;font-weight:400;letter-spacing:0.045px;">12:00</div><div class="a" style="left:1267px;top:793px;width:1px;height:5px;background:#585858"></div><div id="tk7" class="t" style="left:1393.24px;top:776px;font-size:12.5px;color:#3c3c3c;font-weight:400;letter-spacing:0.045px;">15:00</div><div class="a" style="left:1408px;top:793px;width:1px;height:5px;background:#585858"></div><div class="a" style="left:312px;top:808px;width:1133px;height:2px;background:#e5e5e7"></div><div class="a" style="left:312px;top:824px;width:1133px;height:2px;background:#e5e5e7"></div><svg style="left:1429px;top:777px" width="37" height="18" viewBox="1429 777 37 18"><rect x="1429.200" y="777.700" width="35.700" height="16.700" rx="2.500" fill="#1c9d12"/></svg><div id="tl_livebox" class="t" style="left:1435.20px;top:775.6px;font-size:12px;color:#e2ffde;font-weight:400;letter-spacing:0.000px;letter-spacing:0.35px;-webkit-text-stroke:0.35px #e2ffde;">Live</div><div class="a" style="left:1446px;top:794px;width:2px;height:40px;background:#1c9d12"></div><svg style="left:1441px;top:830px" width="12" height="8" viewBox="0 0 12 8"><path d="M6 0l6 8h-12z" fill="#1c9d12"/></svg></div></body></html>
